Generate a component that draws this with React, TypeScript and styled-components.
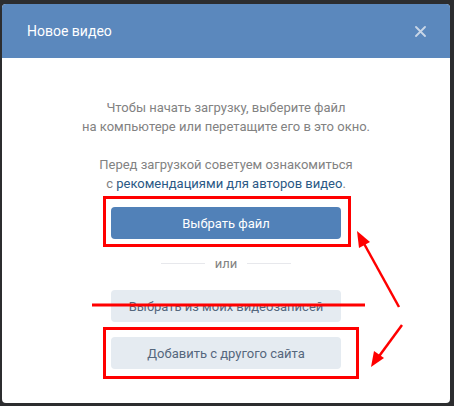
import React from "react";
import styled, { createGlobalStyle } from "styled-components";

const GlobalStyle = createGlobalStyle`
  html, body { margin: 0; padding: 0; background: #2c2d2f; }
  * { box-sizing: border-box; }
`;

const Page = styled.div`
  position: relative;
  width: 454px;
  height: 406px;
  padding: 4px 4px 3px 2px;
  background: #2c2d2f;
  font-family: Roboto, "Open Sans", Arial, sans-serif;
`;

const Modal = styled.div`
  width: 448px;
  height: 399px;
  background: #ffffff;
  border-radius: 4px;
  overflow: hidden;
  display: flex;
  flex-direction: column;
`;

const Header = styled.div`
  height: 54px;
  flex: none;
  background: #5b88bd;
  display: flex;
  align-items: center;
  justify-content: space-between;
  padding: 0 24px 0 25px;
`;

const Title = styled.div`
  color: #ffffff;
  font-size: 14px;
  line-height: 18px;
`;

const Close = styled.button`
  width: 12px;
  height: 12px;
  padding: 0;
  border: 0;
  background: none;
  display: flex;
  align-items: center;
  justify-content: center;
`;

const Body = styled.div`
  display: flex;
  flex-direction: column;
  align-items: center;
  padding: 40px 0 35px;
`;

const Info = styled.p`
  margin: 0;
  color: #828282;
  font-size: 13px;
  line-height: 19px;
  text-align: center;
`;

const Link = styled.span`
  color: #2a5885;
`;

const Button = styled.button<{ $primary?: boolean }>`
  width: 230px;
  height: 32px;
  border: 0;
  border-radius: 4px;
  font-family: inherit;
  font-size: 13px;
  background: ${(p) => (p.$primary ? "#5181b8" : "#e5ebf1")};
  color: ${(p) => (p.$primary ? "#ffffff" : "#55677d")};
  margin-top: ${(p) => (p.$primary ? "14px" : "15px")};
`;

const Divider = styled.div`
  display: flex;
  align-items: center;
  gap: 10px;
  margin: 15px 0 2px;
  color: #828282;
  font-size: 13px;
  line-height: 19px;
`;

const Rule = styled.span`
  width: 44px;
  height: 1px;
  background: #e7e8ec;
`;

const Overlay = styled.svg`
  position: absolute;
  left: 0;
  top: 0;
  pointer-events: none;
`;

export default function App() {
  return (
    <>
      <GlobalStyle />
      <Page>
        <Modal>
          <Header>
            <Title>Новое видео</Title>
            <Close aria-label="Закрыть">
              <svg width="11" height="11" viewBox="0 0 11 11">
                <path d="M1 1L10 10M10 1L1 10" stroke="#c9d6e7" strokeWidth="1.8" strokeLinecap="round" />
              </svg>
            </Close>
          </Header>
          <Body>
            <Info>
              Чтобы начать загрузку, выберите файл
              <br />
              на компьютере или перетащите его в это окно.
              <br />
              <br />
              Перед загрузкой советуем ознакомиться
              <br />с <Link>рекомендациями для авторов видео</Link>.
            </Info>
            <Button $primary>Выбрать файл</Button>
            <Divider>
              <Rule />
              или
              <Rule />
            </Divider>
            <Button>Выбрать из моих видеозаписей</Button>
            <Button>Добавить с другого сайта</Button>
          </Body>
        </Modal>
        <Overlay width="454" height="406" viewBox="0 0 454 406">
          <rect x="104.5" y="197.5" width="245" height="48" fill="none" stroke="#ff0000" strokeWidth="3" />
          <rect x="104.5" y="328.5" width="253" height="49" fill="none" stroke="#ff0000" strokeWidth="3" />
          <line x1="92" y1="305" x2="365" y2="305" stroke="#ff0000" strokeWidth="3" />
          <line x1="399" y1="307" x2="362" y2="240" stroke="#ff0000" strokeWidth="2.5" />
          <polygon points="357,231 359,248 370,242" fill="#ff0000" />
          <line x1="402" y1="325" x2="377" y2="359" stroke="#ff0000" strokeWidth="2.5" />
          <polygon points="371,367 374,351 384,358" fill="#ff0000" />
        </Overlay>
      </Page>
    </>
  );
}
